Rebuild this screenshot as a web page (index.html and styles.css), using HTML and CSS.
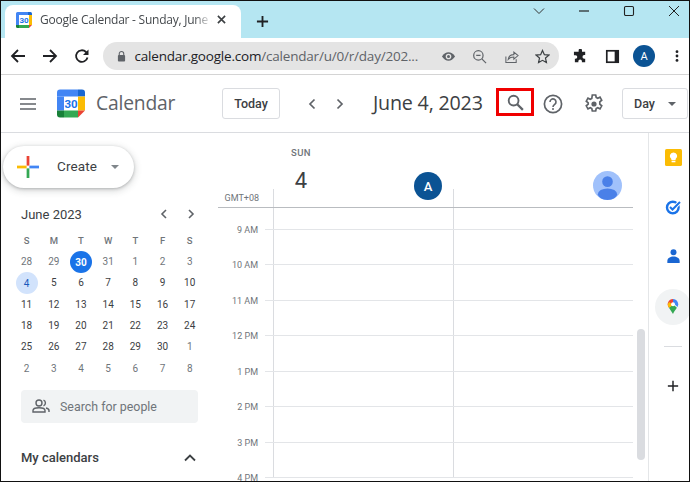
FILE: index.html
```html
<!DOCTYPE html>
<html lang="en">
<head>
<meta charset="utf-8">
<title>Google Calendar</title>
<link rel="stylesheet" href="styles.css">
</head>
<body>
<div class="frame">
  <header class="tabstrip">
    <div class="tab">
      <svg class="favicon" viewBox="0 0 16 16"><rect width="16" height="16" rx="1.5" fill="#fff"/><path d="M0 3V1.5A1.5 1.5 0 0 1 1.500 0H12v3z" fill="#4285f4"/><path d="M0 3h3v10H0z" fill="#4285f4"/><path d="M12 0h2.500A1.500 1.500 0 0 1 16 1.500V3h-4z" fill="#1967d2"/><path d="M13 3h3v10h-3z" fill="#fbbc04"/><path d="M3 13h10v3H3z" fill="#34a853"/><path d="M0 13h3v3H1.500A1.500 1.500 0 0 1 0 14.500z" fill="#188038"/><path d="M13 13h3l-3 3z" fill="#ea4335"/><text x="8" y="11" class="favicon-num">30</text></svg>
      <span class="tab-title">Google Calendar - Sunday, June 4</span>
      <svg class="tab-close" viewBox="0 0 10 10"><path d="M1 1l8 8M9 1l-8 8" stroke="#3c4043" stroke-width="1.800" fill="none"/></svg>
    </div>
    <svg class="newtab" viewBox="0 0 14 14"><path d="M7 1v12M1 7h12" stroke="#202124" stroke-width="2" fill="none"/></svg>
    <div class="winctrls">
      <svg class="winicon" viewBox="0 0 12 12"><path d="M1 3.500l5 5 5-5" stroke="#333" stroke-width="1" fill="none"/></svg>
      <svg class="winicon" viewBox="0 0 12 12"><path d="M1 6h10" stroke="#222" stroke-width="1.200" fill="none"/></svg>
      <svg class="winicon" viewBox="0 0 12 12"><rect x="1.500" y="1.500" width="9" height="9" rx="1.200" stroke="#222" stroke-width="1.100" fill="none"/></svg>
      <svg class="winicon" viewBox="0 0 12 12"><path d="M1 1l10 10M11 1L1 11" stroke="#222" stroke-width="1" fill="none"/></svg>
    </div>
  </header>

  <nav class="toolbar">
    <svg class="navicon" viewBox="0 0 16 16"><path d="M15 8H2M8 2L2 8l6 6" stroke="#202124" stroke-width="1.800" fill="none"/></svg>
    <svg class="navicon" viewBox="0 0 16 16"><path d="M1 8h13M8 2l6 6-6 6" stroke="#202124" stroke-width="1.800" fill="none"/></svg>
    <svg class="navicon" viewBox="0 0 16 16"><path d="M13.500 9.500A5.800 5.800 0 1 1 12 4l1.500 1.800" stroke="#202124" stroke-width="1.800" fill="none"/><path d="M14.500 1.500v5.500H9z" fill="#202124"/></svg>
    <div class="omnibox">
      <svg class="lock" viewBox="0 0 10 12"><path d="M2.500 5V3.500a2.500 2.500 0 0 1 5 0V5" stroke="#5f6368" stroke-width="1.200" fill="none"/><rect x="1" y="5" width="8" height="7" rx="1" fill="#5f6368"/></svg>
      <span class="url"><span class="url-host">calendar.google.com</span>/calendar/u/0/r/day/202...</span>
      <div class="omni-actions">
        <svg class="omni-icon" viewBox="0 0 16 16"><path d="M1 8c2-3 4.500-4.500 7-4.500S13 5 15 8c-2 3-4.500 4.500-7 4.500S3 11 1 8z" fill="#5f6368"/><circle cx="8" cy="8" r="3" fill="#e4e4e4"/><circle cx="8" cy="8" r="1.600" fill="#5f6368"/></svg>
        <svg class="omni-icon" viewBox="0 0 16 16"><circle cx="6.800" cy="6.800" r="5" stroke="#5f6368" stroke-width="1.300" fill="none"/><path d="M4.500 6.800h4.600M10.500 10.500L15 15" stroke="#5f6368" stroke-width="1.300" fill="none"/></svg>
        <svg class="omni-icon" viewBox="0 0 16 16"><path d="M2 8v6.500h11V11" stroke="#5f6368" stroke-width="1.100" fill="none"/><path d="M4.500 11c.5-3.500 3-5 6-5V3.200L15 7l-4.500 3.800V8.500c-2.500 0-4.500.7-6 2.500z" stroke="#5f6368" stroke-width="1.100" fill="none"/></svg>
        <svg class="omni-icon" viewBox="0 0 16 16"><path d="M8 1.500l2 4.500 4.800.5-3.600 3.200 1 4.800L8 12.100l-4.200 2.400 1-4.800L1.200 6.500 6 6z" stroke="#3c4043" stroke-width="1.300" fill="none"/></svg>
      </div>
    </div>
    <div class="tool-actions">
      <svg class="tool-icon" viewBox="0 0 16 16"><path d="M6 1.500a1.800 1.800 0 0 1 3.600 0V3h3.400v3.500h-1a1.900 1.900 0 0 0 0 3.800h1V14H9.500v-1a1.900 1.900 0 0 0-3.800 0v1H2v-3.500h.7a1.900 1.900 0 0 0 0-3.800H1V3h5z" fill="#202124"/></svg>
      <svg class="tool-icon" viewBox="0 0 16 16"><rect x="1" y="1" width="14" height="14" fill="#202124"/><rect x="2.800" y="2.800" width="7.500" height="10.400" fill="#fff"/></svg>
      <span class="profile">A</span>
      <svg class="kebab" viewBox="0 0 4 16"><circle cx="2" cy="3" r="1.600" fill="#202124"/><circle cx="2" cy="8" r="1.600" fill="#202124"/><circle cx="2" cy="13" r="1.600" fill="#202124"/></svg>
    </div>
  </nav>

  <header class="apphead">
    <svg class="hamburger" viewBox="0 0 16 12"><path d="M0 1h16M0 6h16M0 11h16" stroke="#5f6368" stroke-width="1.700" fill="none"/></svg>
    <svg class="logo" viewBox="0 0 28 28"><rect width="28" height="28" rx="3" fill="#fff"/><path d="M0 7V3a3 3 0 0 1 3-3h18v7z" fill="#4285f4"/><path d="M0 7h7v14H0z" fill="#4285f4"/><path d="M21 0h4a3 3 0 0 1 3 3v4h-7z" fill="#1967d2"/><path d="M21 7h7v14h-7z" fill="#fbbc04"/><path d="M7 21h14v7H7z" fill="#34a853"/><path d="M0 21h7v7H3a3 3 0 0 1-3-3z" fill="#188038"/><path d="M21 21h7l-7 7z" fill="#ea4335"/><text x="14" y="18.500" class="logo-num">30</text></svg>
    <span class="brand">Calendar</span>
    <button class="today">Today</button>
    <svg class="chev chev-first" viewBox="0 0 8 12"><path d="M6.500 1.500L2 6l4.500 4.500" stroke="#5f6368" stroke-width="1.700" fill="none"/></svg>
    <svg class="chev chev-next" viewBox="0 0 8 12"><path d="M1.500 1.500L6 6l-4.500 4.500" stroke="#5f6368" stroke-width="1.700" fill="none"/></svg>
    <span class="headdate">June 4, 2023</span>
    <span class="searchbox">
      <svg class="searchicon" viewBox="0 0 18 18"><circle cx="7" cy="7" r="5.200" stroke="#5f6368" stroke-width="2" fill="none"/><path d="M10.800 10.800L16.800 16.800" stroke="#5f6368" stroke-width="2.400" fill="none"/></svg>
    </span>
    <svg class="headicon help" viewBox="0 0 20 20"><circle cx="10" cy="10" r="8.600" stroke="#5f6368" stroke-width="1.700" fill="none"/><path d="M7 8a3 3 0 1 1 4.700 2.400c-1 .7-1.700 1.200-1.700 2.600" stroke="#5f6368" stroke-width="1.600" fill="none"/><circle cx="10" cy="15" r="1" fill="#5f6368"/></svg>
    <svg class="headicon gear" viewBox="0 0 20 20"><path d="M8.300 1h3.400l.5 2.500 1.500.7 2.300-1 1.700 3-1.900 1.600v2.400l1.900 1.600-1.700 3-2.300-1-1.500.7-.5 2.500H8.300l-.5-2.500-1.500-.7-2.300 1-1.700-3 1.900-1.600V8.800L2.300 7.200l1.700-3 2.300 1 1.500-.7z" stroke="#5f6368" stroke-width="1.700" fill="none"/><circle cx="10" cy="10" r="2.600" fill="#5f6368"/></svg>
    <button class="viewbtn">Day<i class="caret"></i></button>
  </header>

  <div class="main">
    <aside class="sidebar">
      <button class="create">
        <svg class="plus" viewBox="0 0 24 24"><path d="M10.500 0h3v10.500h-3z" fill="#ea4335"/><path d="M0 10.500h10.500v3H0z" fill="#fbbc04"/><path d="M13.500 10.500H24v3H13.500z" fill="#4285f4"/><path d="M10.500 13.500h3V24h-3z" fill="#34a853"/></svg>
        <span class="create-label">Create</span>
        <i class="caret caret-light"></i>
      </button>
      <div class="mini-head">
        <span class="mini-title">June 2023</span>
        <svg class="mini-chev" viewBox="0 0 8 12"><path d="M6 2L2 6l4 4" stroke="#5f6368" stroke-width="1.600" fill="none"/></svg>
        <svg class="mini-chev" viewBox="0 0 8 12"><path d="M2 2l4 4-4 4" stroke="#5f6368" stroke-width="1.600" fill="none"/></svg>
      </div>
      <div class="mini-grid">
        <span class="dow">S</span><span class="dow">M</span><span class="dow">T</span><span class="dow">W</span><span class="dow">T</span><span class="dow">F</span><span class="dow">S</span>
        <span class="out">28</span><span class="out">29</span><span class="sel">30</span><span class="out">31</span><span class="out">1</span><span class="out">2</span><span class="out">3</span>
        <span class="now">4</span><span>5</span><span>6</span><span>7</span><span>8</span><span>9</span><span>10</span>
        <span>11</span><span>12</span><span>13</span><span>14</span><span>15</span><span>16</span><span>17</span>
        <span>18</span><span>19</span><span>20</span><span>21</span><span>22</span><span>23</span><span>24</span>
        <span>25</span><span>26</span><span>27</span><span>28</span><span>29</span><span>30</span><span class="out">1</span>
        <span class="out">2</span><span class="out">3</span><span class="out">4</span><span class="out">5</span><span class="out">6</span><span class="out">7</span><span class="out">8</span>
      </div>
      <div class="people">
        <svg class="people-icon" viewBox="0 0 18 14"><circle cx="7" cy="4" r="3" stroke="#5f6368" stroke-width="1.400" fill="none"/><path d="M1 13v-1.500C1 9.800 4 8.800 7 8.800s6 1 6 2.700V13z" stroke="#5f6368" stroke-width="1.400" fill="none"/><path d="M11.500 1.200a3 3 0 0 1 0 5.600M14 9c2 .5 3 1.400 3 2.500V13" stroke="#5f6368" stroke-width="1.400" fill="none"/></svg>
        <span>Search for people</span>
      </div>
      <div class="mycal">
        <span>My calendars</span>
        <svg class="mycal-chev" viewBox="0 0 12 8"><path d="M1 6.500l5-5 5 5" stroke="#3c4043" stroke-width="1.800" fill="none"/></svg>
      </div>
    </aside>

    <section class="day">
      <div class="dayhead">
        <div class="dayhead-gutter"><span class="gmt">GMT+08</span></div>
        <div class="daycol-head">
          <div class="dayinfo"><span class="dayname">SUN</span><span class="daynum">4</span></div>
          <span class="resource-avatar">A</span>
        </div>
        <div class="daycol-head daycol-second">
          <svg class="person-avatar" viewBox="0 0 30 30"><circle cx="15" cy="15" r="15" fill="#a0c1fb"/><circle cx="15" cy="11" r="5.500" fill="#4a80e8"/><ellipse cx="15" cy="24" rx="10" ry="6" fill="#4a80e8"/></svg>
        </div>
      </div>
      <div class="hours">
        <div class="hour"><span class="hour-label">9 AM</span></div>
        <div class="hour"><span class="hour-label">10 AM</span></div>
        <div class="hour"><span class="hour-label">11 AM</span></div>
        <div class="hour"><span class="hour-label">12 PM</span></div>
        <div class="hour"><span class="hour-label">1 PM</span></div>
        <div class="hour"><span class="hour-label">2 PM</span></div>
        <div class="hour"><span class="hour-label">3 PM</span></div>
        <div class="hour"><span class="hour-label">4 PM</span></div>
      </div>
      <i class="thumb"></i>
    </section>

    <aside class="rail">
      <span class="rail-item keep"><svg viewBox="0 0 16 16"><rect width="16" height="16" rx="1.500" fill="#fbbc04"/><path d="M8 3.200a3.400 3.400 0 0 0-2 6.200v1h4v-1a3.400 3.400 0 0 0-2-6.200z" fill="#fff"/><rect x="6.200" y="11" width="3.600" height="1.500" fill="#fff"/></svg></span>
      <span class="rail-item tasks"><svg viewBox="0 0 16 16"><circle cx="7.800" cy="8.500" r="5.800" stroke="#1a73e8" stroke-width="2.400" fill="none"/><path d="M5 8l2.500 2.500L15 3" stroke="#fff" stroke-width="4" fill="none"/><path d="M5 8l2.500 2.500L15 3" stroke="#1a73e8" stroke-width="2" fill="none"/></svg></span>
      <span class="rail-item contacts"><svg viewBox="0 0 16 16"><circle cx="8" cy="4" r="2.800" fill="#1a66d2"/><path d="M2.200 14v-1.800C2.200 9.500 5 8 8 8s5.800 1.500 5.800 4.200V14z" fill="#1a66d2"/></svg></span>
      <span class="rail-item maps"><svg viewBox="0 0 16 20"><path d="M8 0a7 7 0 0 0-5.400 11.500L8 6.800z" fill="#ea4335"/><path d="M2.600 11.500L8 20c1-3 3-5 5.200-8.500L8 7z" fill="#34a853"/><path d="M8 0a7 7 0 0 1 6 10.500L8 5z" fill="#4285f4"/><path d="M3 4l5 4-5.400 3.500A7 7 0 0 1 1 7a7 7 0 0 1 2-3z" fill="#fbbc04"/><circle cx="8" cy="7" r="2.600" fill="#fff"/></svg></span>
      <i class="rail-sep"></i>
      <svg class="rail-plus" viewBox="0 0 14 14"><path d="M7 1v12M1 7h12" stroke="#202124" stroke-width="1.700" fill="none"/></svg>
    </aside>
  </div>
</div>
</body>
</html>
```

FILE: styles.css
```css
* { box-sizing: border-box; }
html, body { margin: 0; padding: 0; }
body { width: 690px; height: 482px; overflow: hidden; background: #fff; font-family: Roboto, "Liberation Sans", sans-serif; color: #3c4043; }
button { font-family: inherit; background: #fff; padding: 0; }
svg { display: block; flex: none; }

.frame { width: 690px; height: 482px; display: flex; flex-direction: column; overflow: hidden; border: 1px solid #111; }

.tabstrip { height: 37px; flex: none; background: #b5e6f2; display: flex; align-items: flex-end; padding-left: 4px; }
.tab { width: 236px; height: 33px; background: #fff; border-radius: 8px 8px 0 0; display: flex; align-items: center; padding: 0 12px 4px 11px; }
.favicon { width: 16px; height: 16px; }
.favicon-num { font: 700 8px Roboto, sans-serif; fill: #1a73e8; text-anchor: middle; }
.tab-title { margin-left: 8px; width: 172px; white-space: nowrap; overflow: hidden; font-size: 12px; color: #45494d; -webkit-mask-image: linear-gradient(to right, #000 90%, transparent); mask-image: linear-gradient(to right, #000 90%, transparent); font-family: "Open Sans", sans-serif; letter-spacing: -.02em; }
.tab-close { width: 9px; height: 9px; margin-left: 5px; }
.newtab { width: 13px; height: 13px; margin: 0 0 10px 15px; }
.winctrls { margin-left: auto; align-self: flex-start; display: flex; gap: 33px; padding: 4px 9px 0 0; }
.winicon { width: 12px; height: 12px; }

.toolbar { height: 37px; flex: none; display: flex; align-items: center; padding-left: 8.500px; border-bottom: 1px solid #d4d4d4; }
.navicon { width: 16px; height: 16px; margin-right: 16px; }
.navicon:nth-child(3) { margin-right: 13px; }
.omnibox { width: 456px; height: 28px; background: #e4e4e4; border-radius: 14px; display: flex; align-items: center; padding: 0 8.500px 0 14px; flex: none; }
.lock { width: 9px; height: 12px; }
.url { margin-left: 9px; font-size: 13.500px; color: #5f6368; white-space: nowrap; font-family: "Open Sans", sans-serif; letter-spacing: -.015em; }
.url-host { color: #202124; }
.omni-actions { margin-left: auto; display: flex; gap: 16.500px; }
.omni-icon { width: 15px; height: 15px; }
.tool-actions { display: flex; align-items: center; margin-left: 14.500px; }
.tool-icon { width: 15px; height: 15px; margin-right: 16.500px; }
.tool-icon + .tool-icon { margin-right: 13.500px; }
.profile { width: 22px; height: 22px; border-radius: 50%; background: #0b5394; color: #fff; font-size: 11px; display: flex; align-items: center; justify-content: center; margin-right: 19.500px; }
.kebab { width: 4px; height: 14px; }

.apphead { height: 58px; flex: none; display: flex; align-items: center; padding-left: 19px; border-bottom: 1px solid #dadce0; }
.hamburger { width: 16px; height: 12px; }
.logo { width: 28px; height: 29px; margin-left: 21px; }
.logo-num { font: 700 11.500px Roboto, sans-serif; fill: #1a73e8; text-anchor: middle; }
.brand { margin: 0 0 2px 11px; font-size: 19.300px; color: #5f6368; width: 126px; font-family: "Open Sans", sans-serif; letter-spacing: -.01em; }
.today { width: 58px; height: 31px; border: 1px solid #dadce0; border-radius: 3px; font-size: 12.500px; font-weight: 500; color: #3c4043; flex: none; }
.chev { width: 8px; height: 12px; }
.chev-first { margin-left: 28px; }
.chev-next { margin-left: 20px; }
.headdate { margin: 0 0 2px 29px; font-size: 19.700px; color: #3c4043; width: 123px; white-space: nowrap; font-family: "Open Sans", sans-serif; letter-spacing: -.01em; flex: none; }
.searchbox { width: 38px; height: 28px; margin-bottom: 3px; border: 3px solid #f00000; display: flex; align-items: center; justify-content: center; flex: none; }
.searchicon { width: 17px; height: 17px; }
.headicon { width: 20px; height: 20px; }
.help { margin-left: 9px; }
.gear { margin-left: 21px; }
.viewbtn { margin-left: 18px; width: 66px; height: 31px; border: 1px solid #dadce0; border-radius: 3px; font-size: 12.500px; font-weight: 500; color: #3c4043; display: flex; align-items: center; padding-left: 11px; flex: none; }
.caret { width: 0; height: 0; border: 4px solid transparent; border-top: 4px solid #5f6368; border-bottom: 0; margin-left: 13px; }
.caret-light { border-top-color: #80868b; margin-left: 14px; }

.main { flex: 1; display: flex; min-height: 0; }

.sidebar { width: 217px; flex: none; display: flex; flex-direction: column; padding-top: 13px; }
.create { width: 131px; height: 42px; margin-left: 2px; border: 0; border-radius: 22px; box-shadow: 0 1px 3px rgba(60,64,67,.3), 0 2px 6px 2px rgba(60,64,67,.15); display: flex; align-items: center; padding-left: 14px; flex: none; }
.plus { width: 22px; height: 22px; }
.create-label { margin: 0 0 3px 18px; font-size: 13.500px; font-weight: 400; color: #3c4043; letter-spacing: .01em; }
.mini-head { display: flex; align-items: center; margin: 16px 0 0 20px; height: 20px; width: 177px; }
.mini-title { font-size: 13px; color: #3c4043; flex: 1; }
.mini-chev { width: 8px; height: 12px; margin-left: 19px; }
.mini-chev:last-child { margin: 0 3px 0 19px; }
.mini-grid { display: grid; grid-template-columns: repeat(7, 27.200px); grid-template-rows: 20.500px; grid-auto-rows: 21.300px; margin: 6.500px 0 0 12px; font-size: 10px; color: #3c4043; }
.mini-grid span { display: flex; align-items: center; justify-content: center; }
.mini-grid .dow { color: #70757a; font-size: 9.500px; font-weight: 500; }
.mini-grid .out { color: #70757a; }
.mini-grid .sel { background: #1a73e8; color: #fff; font-weight: 700; border-radius: 50%; width: 22px; height: 22px; justify-self: center; }
.mini-grid .now { background: #d2e3fc; color: #185abc; border-radius: 50%; width: 22px; height: 22px; justify-self: center; }
.people { width: 177px; height: 33px; margin: 11px 0 0 20px; background: #f1f3f4; border-radius: 4px; display: flex; align-items: center; padding-left: 11px; font-size: 12.400px; color: #70757a; flex: none; }
.people span { margin-left: 10px; }
.people-icon { width: 18px; height: 14px; }
.mycal { width: 177px; margin: 26px 0 0 20px; height: 18px; display: flex; align-items: center; justify-content: space-between; font-size: 13px; font-weight: 500; color: #3c4043; padding-right: 2px; flex: none; }
.mycal-chev { width: 12px; height: 8px; }

.day { flex: 1; display: flex; flex-direction: column; position: relative; min-width: 0; }
.dayhead { height: 75px; flex: none; display: grid; grid-template-columns: 55px 180px 180px; border-bottom: 1px solid #b9bcc0; margin-right: 15px; }
.dayhead-gutter { display: flex; align-items: flex-end; justify-content: flex-end; padding: 0 14px 4px 0; }
.gmt { font-size: 9px; color: #70757a; }
.daycol-head { display: flex; position: relative; }
.daycol-head::before { content: ""; position: absolute; left: 0; bottom: 0; height: 18px; border-left: 1px solid #dadce0; }
.dayinfo { display: flex; flex-direction: column; width: 56px; align-items: center; }
.dayname { font-size: 9.500px; font-weight: 500; color: #70757a; margin-top: 14px; letter-spacing: .05em; }
.daynum { font-size: 22px; color: #3c4043; margin-top: 10px; line-height: 26px; }
.resource-avatar { width: 28px; height: 28px; border-radius: 50%; background: #0b5394; color: #fff; font-size: 13px; font-weight: 500; display: flex; align-items: center; justify-content: center; margin: 39px 0 0 85px; }
.person-avatar { width: 29px; height: 29px; margin: 38px 0 0 140px; }
.hours { height: 270px; padding-left: 55px; margin-right: 15px; background: linear-gradient(#dadce0, #dadce0) 55px 0 / 1px 100% no-repeat, linear-gradient(#dadce0, #dadce0) 235px 0 / 1px 100% no-repeat; }
.hour { height: 35.500px; position: relative; border-bottom: 1px solid #e3e5e8; margin-left: -8px; }
.hour:first-child { height: 21.500px; }
.hour-label { position: absolute; right: 100%; bottom: -7px; margin-right: 7px; font-size: 9px; line-height: 12px; color: #70757a; white-space: nowrap; }
.thumb { position: absolute; left: 419px; top: 196px; width: 8px; height: 131px; background: #dadce0; border-radius: 4px; }

.rail { width: 41px; flex: none; border-left: 1px solid #e4e6e8; display: flex; flex-direction: column; align-items: center; padding: 16px 0 0 8px; }
.rail-item { width: 17px; height: 17px; display: block; margin-bottom: 32.500px; flex: none; }
.rail-item svg { width: 17px; height: 17px; }
.tasks svg { width: 16px; height: 16px; }
.maps { width: 36px; height: 36px; margin: -9px 0 0; background: #f1f3f4; border-radius: 50%; display: flex; align-items: center; justify-content: center; }
.maps svg { width: 12px; height: 15px; }
.rail-sep { width: 18px; height: 1px; background: #dadce0; margin-top: 21px; flex: none; }
.rail-plus { width: 12px; height: 12px; margin-top: 33px; }
```
